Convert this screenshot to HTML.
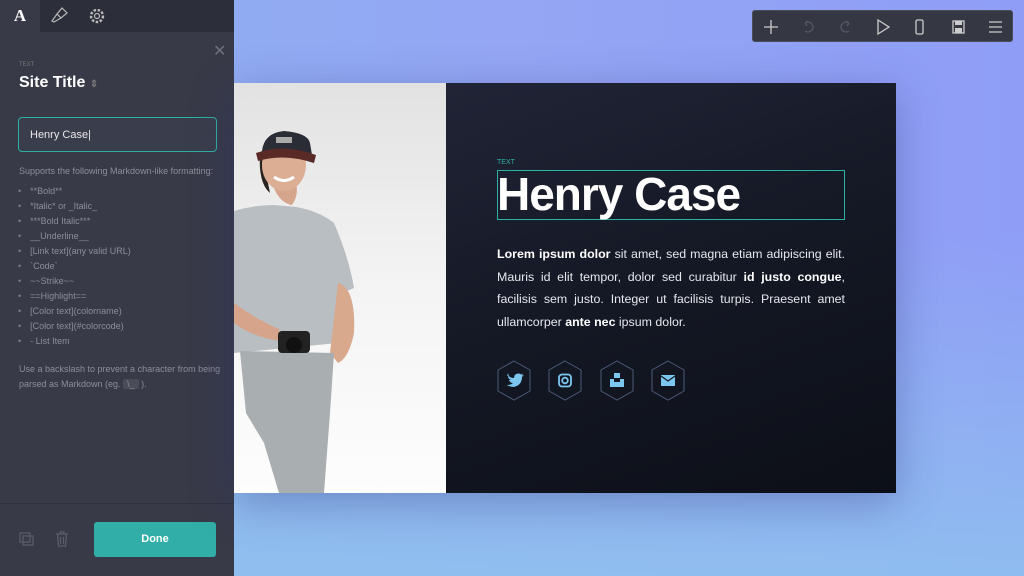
<!DOCTYPE html>
<html><head><meta charset="utf-8"><style>
*{margin:0;padding:0;box-sizing:border-box}
body{width:1024px;height:576px;overflow:hidden;position:relative;font-family:"Liberation Sans",sans-serif;background:linear-gradient(180deg,rgba(143,196,238,0) 40%,rgba(143,196,238,.8) 100%),linear-gradient(90deg,#8eb0f0 0%,#94a6f4 50%,#8f9df6 100%)}
.side{position:absolute;left:0;top:0;width:234px;height:576px;background:#383a48;color:#8c8e9a}
.tabs{height:32px;background:#2c2e39;position:relative}
.tab{position:absolute;top:0;width:40px;height:32px}
.list{position:absolute;left:18px;top:184px;font-size:9px;line-height:15px;list-style:none}
.list li:before{content:"•";margin-right:9px;color:#7d7f8b}
.card{position:absolute;left:234px;top:83px;width:662px;height:410px;box-shadow:0 10px 40px rgba(40,50,120,.35)}
.photo{position:absolute;left:0;top:0;width:212px;height:410px;background:linear-gradient(180deg,#e2e2e2,#f4f4f4 50%,#fdfdfd);overflow:hidden}
.dark{position:absolute;left:212px;top:0;width:450px;height:410px;background:linear-gradient(160deg,#202436,#141824 50%,#0c0f17)}
.tb{position:absolute;left:752px;top:10px;width:261px;height:32px;background:#353743;border-radius:3px;border:1px solid #4a4c58}
</style></head><body>
<div class="side">
 <div class="tabs">
  <div class="tab" style="left:0;background:#383a48;color:#fff;font-family:'Liberation Serif',serif;font-weight:bold;font-size:17px;text-align:center;line-height:32px">A</div>
  <svg class="tab" style="left:40px" viewBox="0 0 40 32"><g fill="none" stroke="#bbb" stroke-width="1.2"><path d="M22 8l5 5-6 5-4-4z M17 14l-5 7 2 1 7-4"/></g></svg>
  <svg class="tab" style="left:78px" viewBox="0 0 40 32"><g fill="none" stroke="#bbb" stroke-width="1.2"><circle cx="19" cy="16" r="2.5"/><circle cx="19" cy="16" r="6" stroke-dasharray="2.5 1.6" stroke-width="2.4"/></g></svg>
 </div>
 <div style="position:absolute;left:213px;top:41px;color:#6e707c;font-size:16px">✕</div>
 <div style="position:absolute;left:19px;top:62px;font-size:6px;color:#777">TEXT</div>
 <div style="position:absolute;left:19px;top:74px;font-size:16px;font-weight:bold;color:#fff">Site Title <span style="color:#777;font-size:10px">⇕</span></div>
 <div style="position:absolute;left:18px;top:117px;width:199px;height:35px;border:1.5px solid #2fb0a4;border-radius:4px;background:#3a3d4b;color:#e8e8e8;font-size:11px;padding:11px 11px">Henry Case|</div>
 <div style="position:absolute;left:19px;top:166px;font-size:9px">Supports the following Markdown-like formatting:</div>
 <ul class="list"><li>**Bold**</li><li>*Italic* or _Italic_</li><li>***Bold Italic***</li><li>__Underline__</li><li>[Link text](any valid URL)</li><li>`Code`</li><li>~~Strike~~</li><li>==Highlight==</li><li>[Color text](colorname)</li><li>[Color text](#colorcode)</li><li>- List Item</li></ul>
 <div style="position:absolute;left:19px;top:362px;font-size:9px;line-height:15px;width:205px">Use a backslash to prevent a character from being parsed as Markdown (eg. <span style="background:#4a4c58;padding:0 4px;border-radius:2px">\_</span> ).</div>
 <div style="position:absolute;left:0;top:503px;width:234px;border-top:1px solid #2e303b"></div>
 <svg style="position:absolute;left:18px;top:531px" width="18" height="16"><g fill="none" stroke="#5c5e6a" stroke-width="1.2"><rect x="2" y="2" width="10" height="9"/><rect x="5" y="5" width="10" height="9"/></g></svg>
 <svg style="position:absolute;left:55px;top:531px" width="14" height="16"><g fill="none" stroke="#5c5e6a" stroke-width="1.2"><path d="M1 3h12M5 3V1h4v2M2.5 3l1 12h7l1-12M5.5 6v7M8.5 6v7"/></g></svg>
 <div style="position:absolute;left:94px;top:522px;width:122px;height:35px;background:#30aea7;border-radius:3px;color:#fff;font-weight:bold;font-size:11px;text-align:center;line-height:35px">Done</div>
</div>
<div class="card">
 <div class="photo">
  <svg width="212" height="410" viewBox="0 0 212 410">
   <path d="M0 128 Q20 122 40 122 L62 124 Q85 128 100 140 Q115 175 120 205 L108 210 L104 260 L0 270 Z" fill="#b8bec1"/>
   <path d="M104 200 Q122 205 120 250 Q115 275 104 280 L96 270 Z" fill="#d9a98e"/>
   <path d="M0 220 Q20 235 45 246 L48 258 Q20 255 0 240 Z" fill="#d6a48a"/>
   <path d="M6 268 L100 270 L96 330 L90 410 L45 410 L30 360 L12 330 Z" fill="#a9aeb0"/>
   <rect x="44" y="248" width="32" height="22" rx="4" fill="#222"/><circle cx="60" cy="262" r="8" fill="#111"/>
   <path d="M40 105 Q46 120 58 122 Q65 112 62 100 Z" fill="#d6a68c"/>
   <path d="M26 70 Q24 100 36 110 L30 80 Z" fill="#2a2420"/>
   <ellipse cx="50" cy="82" rx="22" ry="26" fill="#dcae93"/>
   <path d="M28 68 Q30 50 50 48 Q74 50 76 60 L78 72 L26 72 Z" fill="#2a2c36"/>
   <rect x="42" y="54" width="16" height="6" fill="#aaa"/>
   <path d="M22 70 Q50 60 82 72 L80 80 Q50 70 24 78 Z" fill="#5a2a26"/>
   <path d="M40 94 Q50 101 60 94" stroke="#fff" stroke-width="3" fill="none"/>
  </svg>
 </div>
 <div class="dark">
  <div style="position:absolute;left:51px;top:76px;font-size:7px;color:#2fb0a4">TEXT</div>
  <div style="position:absolute;left:51px;top:87px;width:348px;height:50px;border:1.5px solid #2fb0a4"></div>
  <div style="position:absolute;left:51px;top:84px;font-size:46px;font-weight:bold;color:#fff;letter-spacing:-1px">Henry Case</div>
  <div style="position:absolute;left:51px;top:160px;width:348px;font-size:12.4px;line-height:22.5px;color:#e6e8ee;text-align:justify"><b style="color:#fff">Lorem ipsum dolor</b> sit amet, sed magna etiam adipiscing elit. Mauris id elit tempor, dolor sed curabitur <b style="color:#fff">id justo congue</b>, facilisis sem justo. Integer ut facilisis turpis. Praesent amet ullamcorper <b style="color:#fff">ante nec</b> ipsum dolor.</div>
  <svg style="position:absolute;left:51px;top:277px" width="200" height="42" viewBox="0 0 200 42">
   <g fill="none" stroke="#4d5a78" stroke-width="1"><path d="M17 1L33 10V31L17 40L1 31V10Z"/>
   <path d="M68 1L84 10V31L68 40L52 31V10Z"/><path d="M120 1L136 10V31L120 40L104 31V10Z"/><path d="M171 1L187 10V31L171 40L155 31V10Z"/></g>
   <path d="M10 15q3 3 7 3q0-4 4-4.5q2 0 3 1l2-1-1 2 2-.5-2 2q0 8-8 10q-4 0-7-2q4 0 6-2q-3 0-4-3h2q-3-1-3-4l2 .5q-3-2-1-4z" fill="#7cc7ef"/>
   <g fill="none" stroke="#7cc7ef" stroke-width="1.8"><rect x="62" y="14.5" width="12" height="12" rx="3"/><circle cx="68" cy="20.5" r="2.8"/></g>
   <path d="M117 13h6v5h-6z M113 19h4v3h6v-3h4v8h-14z" fill="#7cc7ef"/>
   <path d="M164 15h14v11h-14z" fill="#7cc7ef"/><path d="M164 16l7 5 7-5" stroke="#131722" stroke-width="1.2" fill="none"/>
  </svg>
 </div>
</div>
<div class="tb">
 <svg width="261" height="32" viewBox="0 0 261 32"><g fill="none" stroke-width="1.3">
  <path d="M18 9v14M11 16h14" stroke="#ccc"/>
  <path d="M52 12a5 5 0 1 1 0 8M52 12l3-2M52 12l2 3" stroke="#555866"/>
  <path d="M96 12a5 5 0 1 0 0 8M96 12l-3-2M96 12l-2 3" stroke="#555866"/>
  <path d="M125 9l11 7-11 7z" stroke="#ccc"/>
  <rect x="163" y="9" width="7" height="14" rx="1.5" stroke="#ccc"/>
  <rect x="200" y="10" width="11" height="12" stroke="#ccc"/><rect x="202" y="10" width="7" height="4" fill="#ccc" stroke="none"/><rect x="202" y="17" width="7" height="5" fill="#ccc" stroke="none"/>
  <path d="M236 11h13M236 16h13M236 21h13" stroke="#ccc"/>
 </g></svg>
</div>
</body></html>
